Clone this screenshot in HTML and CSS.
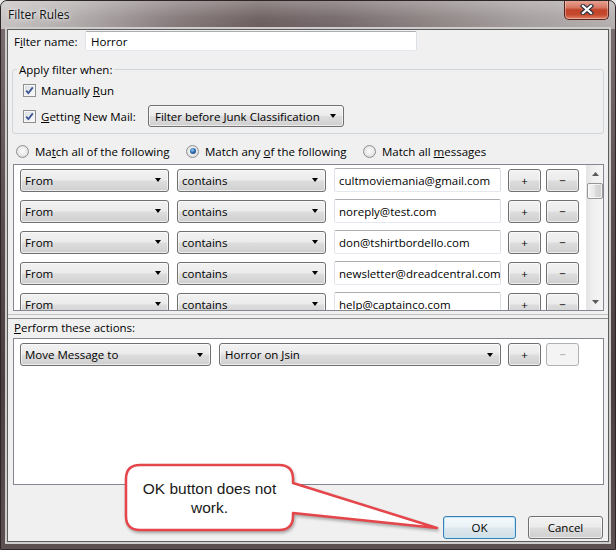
FILE: index.html
```html
<!DOCTYPE html>
<html>
<head>
<meta charset="utf-8">
<title>Filter Rules</title>
<link rel="stylesheet" href="styles.css">
</head>
<body>
<div class="window">
  <div class="titlebar">
    <span class="title">Filter Rules</span>
    <span class="close">
      <svg width="16" height="11" viewBox="0 0 16 11"><path d="M4 2 L12 9 M12 2 L4 9" stroke="#2f3340" stroke-width="4.4" stroke-linecap="square"/><path d="M4 2 L12 9 M12 2 L4 9" stroke="#ffffff" stroke-width="2.2" stroke-linecap="square"/></svg>
    </span>
  </div>
  <div class="client">
    <div class="name-row">
      <span class="name-label">F<u>i</u>lter name:</span>
      <div class="textbox name-input">Horror</div>
    </div>

    <fieldset class="group">
      <legend>Apply filter when:</legend>
      <div class="check-row">
        <span class="checkbox"><svg width="11" height="11" viewBox="0 0 11 11"><path d="M2.2 5.6 L4.4 8 L8.8 2.4" fill="none" stroke="#3b5597" stroke-width="1.8"/></svg></span>
        <span>Manually <u>R</u>un</span>
      </div>
      <div class="check-row second">
        <span class="checkbox"><svg width="11" height="11" viewBox="0 0 11 11"><path d="M2.2 5.6 L4.4 8 L8.8 2.4" fill="none" stroke="#3b5597" stroke-width="1.8"/></svg></span>
        <span class="mail-label"><u>G</u>etting New Mail:</span>
        <div class="menulist junk"><span>Filter before Junk Classification</span><span class="arrow"></span></div>
      </div>
    </fieldset>

    <div class="radio-row">
      <span class="radio-item r1"><span class="radio"></span><span>Ma<u>t</u>ch all of the following</span></span>
      <span class="radio-item r2"><span class="radio on"></span><span>Match any <u>o</u>f the following</span></span>
      <span class="radio-item r3"><span class="radio"></span><span>Match all <u>m</u>essages</span></span>
    </div>

    <div class="listbox rules">
      <div class="rows">
        <div class="row">
          <div class="menulist sel-a"><span>From</span><span class="arrow"></span></div>
          <div class="menulist sel-b"><span>contains</span><span class="arrow"></span></div>
          <div class="textbox val">cultmoviemania@gmail.com</div>
          <div class="btn pm">+</div>
          <div class="btn pm">&minus;</div>
        </div>
        <div class="row">
          <div class="menulist sel-a"><span>From</span><span class="arrow"></span></div>
          <div class="menulist sel-b"><span>contains</span><span class="arrow"></span></div>
          <div class="textbox val">noreply@test.com</div>
          <div class="btn pm">+</div>
          <div class="btn pm">&minus;</div>
        </div>
        <div class="row">
          <div class="menulist sel-a"><span>From</span><span class="arrow"></span></div>
          <div class="menulist sel-b"><span>contains</span><span class="arrow"></span></div>
          <div class="textbox val">don@tshirtbordello.com</div>
          <div class="btn pm">+</div>
          <div class="btn pm">&minus;</div>
        </div>
        <div class="row">
          <div class="menulist sel-a"><span>From</span><span class="arrow"></span></div>
          <div class="menulist sel-b"><span>contains</span><span class="arrow"></span></div>
          <div class="textbox val">newsletter@dreadcentral.com</div>
          <div class="btn pm">+</div>
          <div class="btn pm">&minus;</div>
        </div>
        <div class="row">
          <div class="menulist sel-a"><span>From</span><span class="arrow"></span></div>
          <div class="menulist sel-b"><span>contains</span><span class="arrow"></span></div>
          <div class="textbox val">help@captainco.com</div>
          <div class="btn pm">+</div>
          <div class="btn pm">&minus;</div>
        </div>
      </div>
      <div class="scrollbar">
        <div class="sb-btn"><svg width="7" height="4" viewBox="0 0 7 4"><path d="M0 4 L3.5 0 L7 4 Z" fill="#5a5a5a"/></svg></div>
        <div class="sb-thumb"></div>
        <div class="sb-track"></div>
        <div class="sb-btn"><svg width="7" height="4" viewBox="0 0 7 4"><path d="M0 0 L3.5 4 L7 0 Z" fill="#5a5a5a"/></svg></div>
      </div>
    </div>

    <div class="splitter"></div>

    <div class="section-label"><u>P</u>erform these actions:</div>

    <div class="listbox actions">
      <div class="action-row">
        <div class="menulist act-a"><span>Move Message to</span><span class="arrow"></span></div>
        <div class="menulist act-b"><span>Horror on Jsin</span><span class="arrow"></span></div>
        <div class="btn pm">+</div>
        <div class="btn pm disabled">&minus;</div>
      </div>
    </div>

    <div class="dialog-buttons">
      <div class="btn dlg default">OK</div>
      <div class="btn dlg cancel">Cancel</div>
    </div>
  </div>
</div>

<div class="callout">
  <svg class="callout-shape" width="325" height="80" viewBox="0 0 325 80">
    <path d="M22 7 H161 Q175 7 175 21 V25 L319 70 L175 55 V58 Q175 72 161 72 H22 Q8 72 8 58 V21 Q8 7 22 7 Z" fill="#ffffff" stroke="#e5464b" stroke-width="2.5" stroke-linejoin="round"/>
  </svg>
  <div class="callout-text">OK button does not<br>work.</div>
</div>
</body>
</html>
```

FILE: styles.css
```css
* { box-sizing: border-box; }
html, body { margin: 0; padding: 0; }
body {
  width: 616px;
  height: 550px;
  overflow: hidden;
  position: relative;
  background: #e6e6e6;
  font-family: "Open Sans", "Noto Sans", sans-serif;
  font-size: 11.5px;
  color: #000;
}

.window {
  width: 616px;
  height: 550px;
  display: flex;
  flex-direction: column;
  border: 1px solid #2e2626;
  border-radius: 7px 7px 0 0;
  overflow: hidden;
  background: linear-gradient(180deg, #7d7171 0%, #5a4d4d 40%, #4a3e3e 70%, #5c5050 100%);
}

.titlebar {
  height: 28px;
  flex: none;
  display: flex;
  justify-content: space-between;
  align-items: flex-start;
  padding-left: 7px;
  padding-right: 6px;
  background:
    linear-gradient(180deg, rgba(255,255,255,0.28) 0%, rgba(255,255,255,0.05) 60%, rgba(255,255,255,0) 100%),
    linear-gradient(90deg, #c6c2c2 0%, #b0aaaa 12%, #85797a 28%, #6a5c5c 42%, #74676a 55%, #8c8282 70%, #a39c9c 85%, #b4aeae 100%);
}
.title {
  line-height: 27px;
  font-size: 12px;
  color: #111;
  text-shadow: 0 0 6px rgba(255,255,255,0.9), 0 0 3px rgba(255,255,255,0.7);
}
.close {
  width: 45px;
  height: 20px;
  margin-top: -1px;
  display: flex;
  align-items: center;
  justify-content: center;
  border: 1px solid #5a231c;
  border-top: none;
  border-radius: 0 0 5px 5px;
  background: linear-gradient(180deg, #e9a898 0%, #d67762 40%, #c2432a 52%, #c64a2f 78%, #e08466 100%);
  box-shadow: inset 0 0 0 1px rgba(255,255,255,0.35);
}

.client {
  flex: 1;
  margin: 0 6px 7px 6px;
  border: 1px solid #5c5c5c;
  box-shadow: 0 0 0 2px #cfcccc;
  background: #f0f0f0;
  display: flex;
  flex-direction: column;
  padding: 0 4px 2px 5px;
}

/* filter name */
.name-row {
  display: flex;
  align-items: center;
  height: 20px;
  margin-top: 1px;
}
.name-label {
  width: 72px;
  padding-left: 1px;
}
.textbox {
  background: #fff;
  border: 1px solid;
  border-color: #abadb3 #dbdfe6 #e3e9ef #e2e3ea;
  border-radius: 2px;
  display: flex;
  align-items: center;
  white-space: nowrap;
  overflow: hidden;
}
.name-input {
  width: 332px;
  height: 20px;
  padding-left: 5px;
}

/* group box */
.group {
  margin: 11px 0 0 -1px;
  border: 1px solid #d0d7dc;
  border-radius: 3px;
  padding: 0 0 6px 10px;
  min-width: 0;
}
.group legend {
  padding: 0 2px;
  margin-left: -6px;
  line-height: 15px;
}
.check-row {
  display: flex;
  align-items: center;
  height: 16px;
  margin-top: 5px;
}
.check-row.second {
  height: 22px;
  margin-top: 7px;
}
.checkbox {
  width: 13px;
  height: 13px;
  margin-right: 5px;
  border: 1px solid #8e8f8f;
  background: linear-gradient(135deg, #d6d9dd 0%, #eef0f2 60%, #fbfbfb 100%);
  box-shadow: inset 0 0 0 1px #f6f6f6;
  display: flex;
  align-items: center;
  justify-content: center;
}
.checkbox svg { display: block; }
.mail-label { width: 107px; }

/* menulist */
.menulist {
  display: flex;
  align-items: center;
  height: 23px;
  padding-left: 4px;
  border: 1px solid #707070;
  border-radius: 3px;
  background: linear-gradient(180deg, #f2f2f2 0%, #ebebeb 48%, #dddddd 52%, #cfcfcf 100%);
  box-shadow: inset 0 0 0 1px rgba(255,255,255,0.6);
  white-space: nowrap;
}
.menulist .arrow {
  margin-left: auto;
  margin-right: 7px;
  width: 0;
  height: 0;
  border-left: 3.5px solid transparent;
  border-right: 3.5px solid transparent;
  border-top: 4px solid #000;
}
.junk {
  width: 196px;
  height: 22px;
  padding-left: 6px;
}

/* radios */
.radio-row {
  display: flex;
  align-items: center;
  height: 16px;
  margin-top: 9px;
}
.radio-item {
  display: flex;
  align-items: center;
  white-space: nowrap;
}
.r1 { width: 173px; padding-left: 3px; }
.r2 { width: 177px; }
.radio {
  width: 13px;
  height: 13px;
  margin-right: 6px;
  border-radius: 50%;
  border: 1px solid #8e8f8f;
  background: radial-gradient(circle at 50% 45%, #fbfbfb 0%, #ececec 45%, #cfcfcf 100%);
  position: relative;
}
.radio.on::after {
  content: "";
  position: absolute;
  left: 2.5px;
  top: 2.5px;
  width: 6px;
  height: 6px;
  border-radius: 50%;
  background: radial-gradient(circle at 40% 35%, #9cd0f5 0%, #2d6fb3 45%, #0f305e 100%);
}

/* list boxes */
.listbox {
  border: 1px solid #828790;
  background: #fff;
}
.rules {
  height: 147px;
  margin-top: 5px;
  display: flex;
  overflow: hidden;
}
.rows {
  flex: 1;
  padding: 3px 0 0 6px;
  overflow: hidden;
}
.row {
  display: flex;
  align-items: center;
  height: 24px;
  margin-bottom: 7px;
}
.sel-a { width: 149px; margin-right: 8px; }
.sel-b { width: 149px; margin-right: 8px; }
.val {
  width: 167px;
  height: 24px;
  padding-left: 4px;
  margin-right: 7px;
}

.btn {
  display: flex;
  align-items: center;
  justify-content: center;
  border: 1px solid #707070;
  border-radius: 3px;
  background: linear-gradient(180deg, #f2f2f2 0%, #ebebeb 48%, #dddddd 52%, #cfcfcf 100%);
  box-shadow: inset 0 0 0 1px rgba(255,255,255,0.6);
}
.pm {
  width: 33px;
  height: 23px;
  margin-right: 5px;
  font-size: 11.5px;
}
.pm.disabled {
  border-color: #adb2b5;
  background: #f4f4f4;
  color: #a3a3a3;
  box-shadow: none;
}

.scrollbar {
  width: 17px;
  flex: none;
  display: flex;
  flex-direction: column;
  border-left: 1px solid #e6e6e6;
  background: linear-gradient(90deg, #e4e4e4 0%, #efefef 35%, #f5f5f5 100%);
}
.sb-btn {
  height: 17px;
  display: flex;
  align-items: center;
  justify-content: center;
}
.sb-btn svg { display: block; }
.sb-thumb {
  height: 16px;
  margin-top: 1px;
  border: 1px solid #979797;
  border-radius: 2px;
  background: linear-gradient(90deg, #f4f4f4 0%, #e8e8e8 45%, #d9d9d9 55%, #d0d0d0 100%);
  box-shadow: inset 0 0 0 1px rgba(255,255,255,0.7);
}
.sb-track { flex: 1; }

.splitter {
  height: 5px;
  margin: 3px -4px 0 -5px;
  border-top: 1px solid #c4c4c4;
  border-bottom: 1px solid #8c8c8c;
}

.section-label {
  line-height: 15px;
  margin-top: 1px;
  padding-left: 1px;
}

.actions {
  flex: 1;
  margin-top: 3px;
  padding: 4px 0 0 6px;
}
.action-row {
  display: flex;
  align-items: center;
  height: 23px;
}
.act-a { width: 191px; margin-right: 8px; }
.act-b { width: 282px; margin-right: 7px; padding-left: 5px; }

.dialog-buttons {
  display: flex;
  justify-content: flex-end;
  margin-top: 31px;
  margin-right: 1px;
  gap: 12px;
}
.dlg { height: 23px; }
.default {
  width: 73px;
  border-color: #3c7fb1;
  box-shadow: inset 0 0 0 1px #bde6f8;
  background: linear-gradient(180deg, #f4f9fc 0%, #eaf2f6 48%, #dde8ee 52%, #d2dfe6 100%);
}
.cancel { width: 75px; }

/* callout annotation */
.callout {
  position: absolute;
  left: 118px;
  top: 458px;
  width: 325px;
  height: 80px;
}
.callout-shape {
  display: block;
  filter: drop-shadow(1px 2px 1.5px rgba(0,0,0,0.3));
}
.callout-text {
  position: absolute;
  left: 8px;
  top: 7px;
  width: 167px;
  height: 65px;
  display: flex;
  align-items: center;
  justify-content: center;
  text-align: center;
  font-family: "Liberation Sans", Arial, sans-serif;
  font-size: 15.5px;
  line-height: 19px;
  color: #1a1a1a;
}
```
